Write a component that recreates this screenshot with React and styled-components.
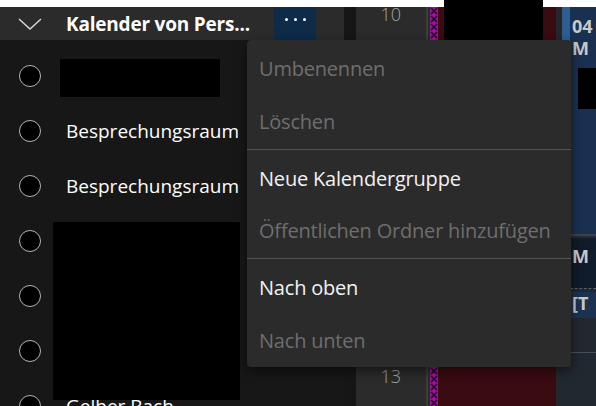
import React from "react";
import styled, { createGlobalStyle } from "styled-components";

const GlobalStyle = createGlobalStyle`
  html, body {
    margin: 0;
    padding: 0;
    background: #ffffff;
  }
  body {
    font-family: "Open Sans", "Noto Sans", sans-serif;
  }
`;

const calendars = [
  { id: 1, name: "" },
  { id: 2, name: "Besprechungsraum" },
  { id: 3, name: "Besprechungsraum" },
  { id: 4, name: "" },
  { id: 5, name: "" },
  { id: 6, name: "" },
  { id: 7, name: "Gelber Bach" },
];

const menuItems = [
  { label: "Umbenennen", disabled: true },
  { label: "Löschen", disabled: true, divider: true },
  { label: "Neue Kalendergruppe" },
  { label: "Öffentlichen Ordner hinzufügen", disabled: true, divider: true },
  { label: "Nach oben" },
  { label: "Nach unten", disabled: true },
];

const Chevron = () => (
  <svg width="24" height="12" viewBox="0 0 24 12">
    <path d="M1 1 L12 11 L23 1" fill="none" stroke="#d6d6d6" strokeWidth="1.5" />
  </svg>
);

const Hatch = () => (
  <svg width="8" height="100%">
    <defs>
      <pattern id="hatch" width="8" height="8" patternUnits="userSpaceOnUse">
        <rect width="8" height="8" fill="#a010a0" />
        <path d="M1 1 L7 7 M7 1 L1 7" stroke="#1a001a" strokeWidth="1.6" />
      </pattern>
    </defs>
    <rect width="8" height="100%" fill="url(#hatch)" />
  </svg>
);

export default function App() {
  return (
    <>
      <GlobalStyle />
      <Frame>
        <Sidebar>
          <Header>
            <Toggle>
              <Chevron />
            </Toggle>
            <Title>Kalender von Pers...</Title>
            <MoreButton>
              <Dot />
              <Dot />
              <Dot />
            </MoreButton>
          </Header>
          <List>
            {calendars.map((c) => (
              <Row key={c.id}>
                <Circle />
                <RowLabel>{c.name}</RowLabel>
              </Row>
            ))}
          </List>
          <Redact style={{ left: 60, top: 52, width: 160, height: 38 }} />
          <Redact style={{ left: 53, top: 215, width: 187, height: 178 }} />
        </Sidebar>
        <Gutter />
        <TimeColumn>
          <HourLabel>10</HourLabel>
          <HourLabel>11</HourLabel>
          <HourLabel>12</HourLabel>
          <HourLabel>13</HourLabel>
        </TimeColumn>
        <DayColumn>
          <Hatch />
          <RedEvent />
        </DayColumn>
        <SideColumn>
          <Stripe />
          <Events>
            <EventA>
              <EventText>04</EventText>
              <EventText>M</EventText>
              <EventBlack />
            </EventA>
            <EventB>
              <EventText>M</EventText>
            </EventB>
            <EventC>
              <EventText>[T</EventText>
            </EventC>
            <EventRest />
          </Events>
        </SideColumn>
        <Redact style={{ left: 444, top: 0, width: 99, height: 44 }} />
        <Menu>
          {menuItems.map((m) => (
            <React.Fragment key={m.label}>
              <MenuItem $disabled={m.disabled}>{m.label}</MenuItem>
              {m.divider && <Divider />}
            </React.Fragment>
          ))}
        </Menu>
      </Frame>
    </>
  );
}

const Frame = styled.div`
  position: relative;
  width: 596px;
  height: 406px;
  overflow: hidden;
  display: flex;
  padding-top: 7px;
  box-sizing: border-box;
  background: #ffffff;
`;

const Sidebar = styled.div`
  position: relative;
  width: 344px;
  display: flex;
  flex-direction: column;
  background: #171717;
`;

const Header = styled.div`
  height: 33px;
  display: flex;
  align-items: center;
  background: #2b2b2b;
`;

const Toggle = styled.div`
  width: 66px;
  display: flex;
  justify-content: center;
  padding-right: 6px;
  box-sizing: border-box;
`;

const Title = styled.div`
  width: 208px;
  color: #ffffff;
  font-weight: 700;
  font-size: 19px;
  letter-spacing: -0.2px;
  white-space: nowrap;
  overflow: hidden;
`;

const MoreButton = styled.div`
  width: 42px;
  height: 33px;
  display: flex;
  align-items: center;
  justify-content: center;
  gap: 6px;
  background: #0e2b4a;
  border-radius: 0 0 3px 3px;
  padding-bottom: 8px;
  box-sizing: border-box;
`;

const Dot = styled.span`
  width: 3px;
  height: 3px;
  border-radius: 50%;
  background: #ffffff;
`;

const List = styled.div`
  padding-top: 8px;
  display: flex;
  flex-direction: column;
`;

const Row = styled.div`
  height: 55px;
  display: flex;
  align-items: center;
  padding-left: 19px;
  gap: 25px;
  flex-shrink: 0;
`;

const Circle = styled.span`
  width: 20px;
  height: 20px;
  border-radius: 50%;
  border: 1.3px solid #b4b4b4;
  background: #000000;
  flex-shrink: 0;
`;

const RowLabel = styled.span`
  color: #ffffff;
  font-size: 19px;
  white-space: nowrap;
`;

const Redact = styled.div`
  position: absolute;
  background: #000000;
`;

const Gutter = styled.div`
  width: 12px;
  background: #161616;
`;

const TimeColumn = styled.div`
  width: 72px;
  display: flex;
  flex-direction: column;
  align-items: flex-end;
  padding-right: 25px;
  box-sizing: border-box;
  background: #2b2b2b;
  border-right: 2px solid #3c3c3c;
`;

const HourLabel = styled.div`
  height: 120.7px;
  flex-shrink: 0;
  color: #a6a6a6;
  font-size: 18px;
  font-weight: 300;
  line-height: 14px;
`;

const DayColumn = styled.div`
  width: 126px;
  display: flex;
  padding-left: 2px;
  background: #2b2b2b;
`;

const RedEvent = styled.div`
  flex: 1;
  background: #3a0b10;
`;

const SideColumn = styled.div`
  flex: 1;
  display: flex;
  padding-left: 6px;
  background: #222830;
`;

const Stripe = styled.div`
  width: 8px;
  height: 229px;
  background: #2e5d93;
`;

const Events = styled.div`
  flex: 1;
  display: flex;
  flex-direction: column;
`;

const EventText = styled.div`
  color: #c8c8c8;
  font-weight: 700;
  font-size: 18px;
  line-height: 22px;
  padding-left: 2px;
`;

const EventA = styled.div`
  height: 229px;
  padding-top: 8px;
  box-sizing: border-box;
  background: #1a3050;
  border-bottom: 2px solid #3a4350;
`;

const EventBlack = styled.div`
  margin: 9px 0 0 8px;
  height: 41px;
  background: #000000;
`;

const EventB = styled.div`
  height: 53px;
  padding-top: 7px;
  box-sizing: border-box;
  background: #101c2b;
  border-top: 2px solid #262b33;
  border-bottom: 1px dashed #56606c;
`;

const EventC = styled.div`
  height: 26px;
  margin-top: 3px;
  background: #1b3252;
`;

const EventRest = styled.div`
  height: 34px;
  border-bottom: 1px solid #48505a;
`;

const Menu = styled.div`
  position: absolute;
  left: 247px;
  top: 40px;
  width: 324px;
  height: 327px;
  padding-top: 2px;
  box-sizing: border-box;
  background: #2b2b2b;
  border-radius: 4px;
  box-shadow: 0 4px 12px rgba(0, 0, 0, 0.5);
  display: flex;
  flex-direction: column;
`;

const MenuItem = styled.div`
  height: 53px;
  display: flex;
  align-items: center;
  padding-left: 12px;
  font-size: 20px;
  letter-spacing: -0.2px;
  color: ${(p) => (p.$disabled ? "#6e6e6e" : "#f2f2f2")};
`;

const Divider = styled.div`
  height: 1px;
  margin: 1px 0 2px;
  background: #555555;
`;
